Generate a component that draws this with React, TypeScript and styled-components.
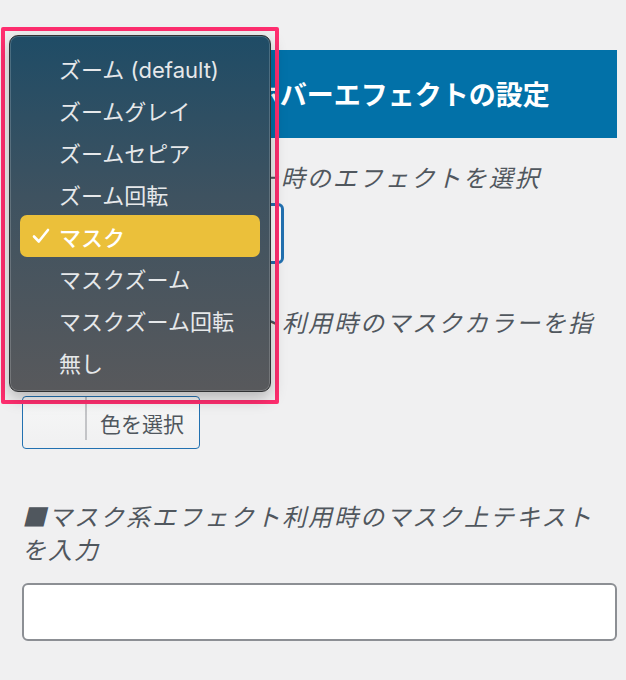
import React from 'react';
import styled, { createGlobalStyle } from 'styled-components';

const GlobalStyle = createGlobalStyle`
  html, body {
    margin: 0;
    padding: 0;
    background: #f0f0f1;
  }
  body {
    font-family: "Noto Sans CJK JP", "Noto Sans", sans-serif;
    color: #50575e;
  }
`;

const options = [
  'ズーム (default)',
  'ズームグレイ',
  'ズームセピア',
  'ズーム回転',
  'マスク',
  'マスクズーム',
  'マスクズーム回転',
  '無し',
];

const selected = 'マスク';

const CheckIcon = () => (
  <svg width="18" height="16" viewBox="0 0 18 16" fill="none">
    <path d="M2 8.5 L6.8 13.5 L16 2" stroke="#ffffff" strokeWidth="2.6" strokeLinecap="round" strokeLinejoin="round" />
  </svg>
);

export default function App() {
  return (
    <>
      <GlobalStyle />
      <Page>
        <SectionTitle>■アイキャッチのホバーエフェクトの設定</SectionTitle>
        <FieldLabel>■アイキャッチホバー時のエフェクトを選択</FieldLabel>
        <SelectBox />
        <FieldLabel $gap={41}>■マスク系エフェクト利用時のマスクカラーを指定</FieldLabel>
        <ColorButton>
          <Swatch />
          <ColorText>色を選択</ColorText>
        </ColorButton>
        <FieldLabel $gap={50}>■マスク系エフェクト利用時のマスク上テキストを入力</FieldLabel>
        <TextInput />

        <Highlight />
        <Menu>
          {options.map((opt) => (
            <MenuItem key={opt} $active={opt === selected}>
              <CheckSlot>{opt === selected && <CheckIcon />}</CheckSlot>
              {opt}
            </MenuItem>
          ))}
        </Menu>
      </Page>
    </>
  );
}

const Page = styled.div`
  position: relative;
  display: flex;
  flex-direction: column;
  align-items: flex-start;
  padding: 50px 9px 30px 22px;
  min-height: 600px;
`;

const SectionTitle = styled.h2`
  align-self: stretch;
  margin: 0;
  height: 88px;
  padding: 0 16px;
  background: #0271a8;
  color: #ffffff;
  font-size: 27px;
  font-weight: 700;
  line-height: 88px;
  white-space: nowrap;
  overflow: hidden;
`;

const FieldLabel = styled.p<{ $gap?: number }>`
  margin: ${(p) => p.$gap ?? 22}px 0 0;
  font-size: 24px;
  font-style: italic;
  line-height: 33px;
  color: #50575e;
  letter-spacing: 2px;
`;

const SelectBox = styled.div`
  margin-top: 10px;
  box-sizing: border-box;
  width: 262px;
  height: 61px;
  border: 3px solid #2271b1;
  border-radius: 6px;
  background: #ffffff;
`;

const ColorButton = styled.div`
  margin-top: 25px;
  box-sizing: border-box;
  width: 178px;
  height: 53px;
  border: 1px solid #2271b1;
  border-radius: 4px;
  background: linear-gradient(#f6f7f7, #f0f0f1);
  display: flex;
  align-items: stretch;
`;

const Swatch = styled.div`
  width: 62px;
  border-right: 2px solid #c3c4c7;
  margin-bottom: 8px;
`;

const ColorText = styled.span`
  display: flex;
  align-items: center;
  padding-left: 13px;
  font-size: 21px;
  color: #50575e;
`;

const TextInput = styled.div`
  margin-top: 18px;
  align-self: stretch;
  box-sizing: border-box;
  height: 58px;
  border: 2px solid #8c8f94;
  border-radius: 6px;
  background: #ffffff;
`;

const Highlight = styled.div`
  position: absolute;
  left: 1px;
  top: 27px;
  width: 278px;
  height: 377px;
  box-sizing: border-box;
  border: 4px solid #ff2e6f;
  border-radius: 2px;
  pointer-events: none;
`;

const Menu = styled.div`
  position: absolute;
  left: 9px;
  top: 35px;
  width: 262px;
  height: 357px;
  box-sizing: border-box;
  padding: 11px 10px 8px;
  border: 1px solid #2f3133;
  border-radius: 9px;
  background: linear-gradient(180deg, #1f4c66 0%, #3e5260 45%, #58595c 100%);
  box-shadow: inset 0 0 0 1px rgba(255, 255, 255, 0.18), 0 6px 16px rgba(0, 0, 0, 0.25);
  display: flex;
  flex-direction: column;
`;

const MenuItem = styled.div<{ $active: boolean }>`
  display: flex;
  align-items: center;
  height: 42px;
  flex-shrink: 0;
  border-radius: 7px;
  background: ${(p) => (p.$active ? '#ebc03a' : 'transparent')};
  color: ${(p) => (p.$active ? '#ffffff' : '#e6e8ea')};
  font-family: "Inter", "Noto Sans CJK JP", sans-serif;
  font-size: 22px;
  font-weight: ${(p) => (p.$active ? 500 : 400)};
  white-space: nowrap;
`;

const CheckSlot = styled.span`
  width: 39px;
  display: flex;
  justify-content: center;
  padding-left: 2px;
  box-sizing: border-box;
`;
